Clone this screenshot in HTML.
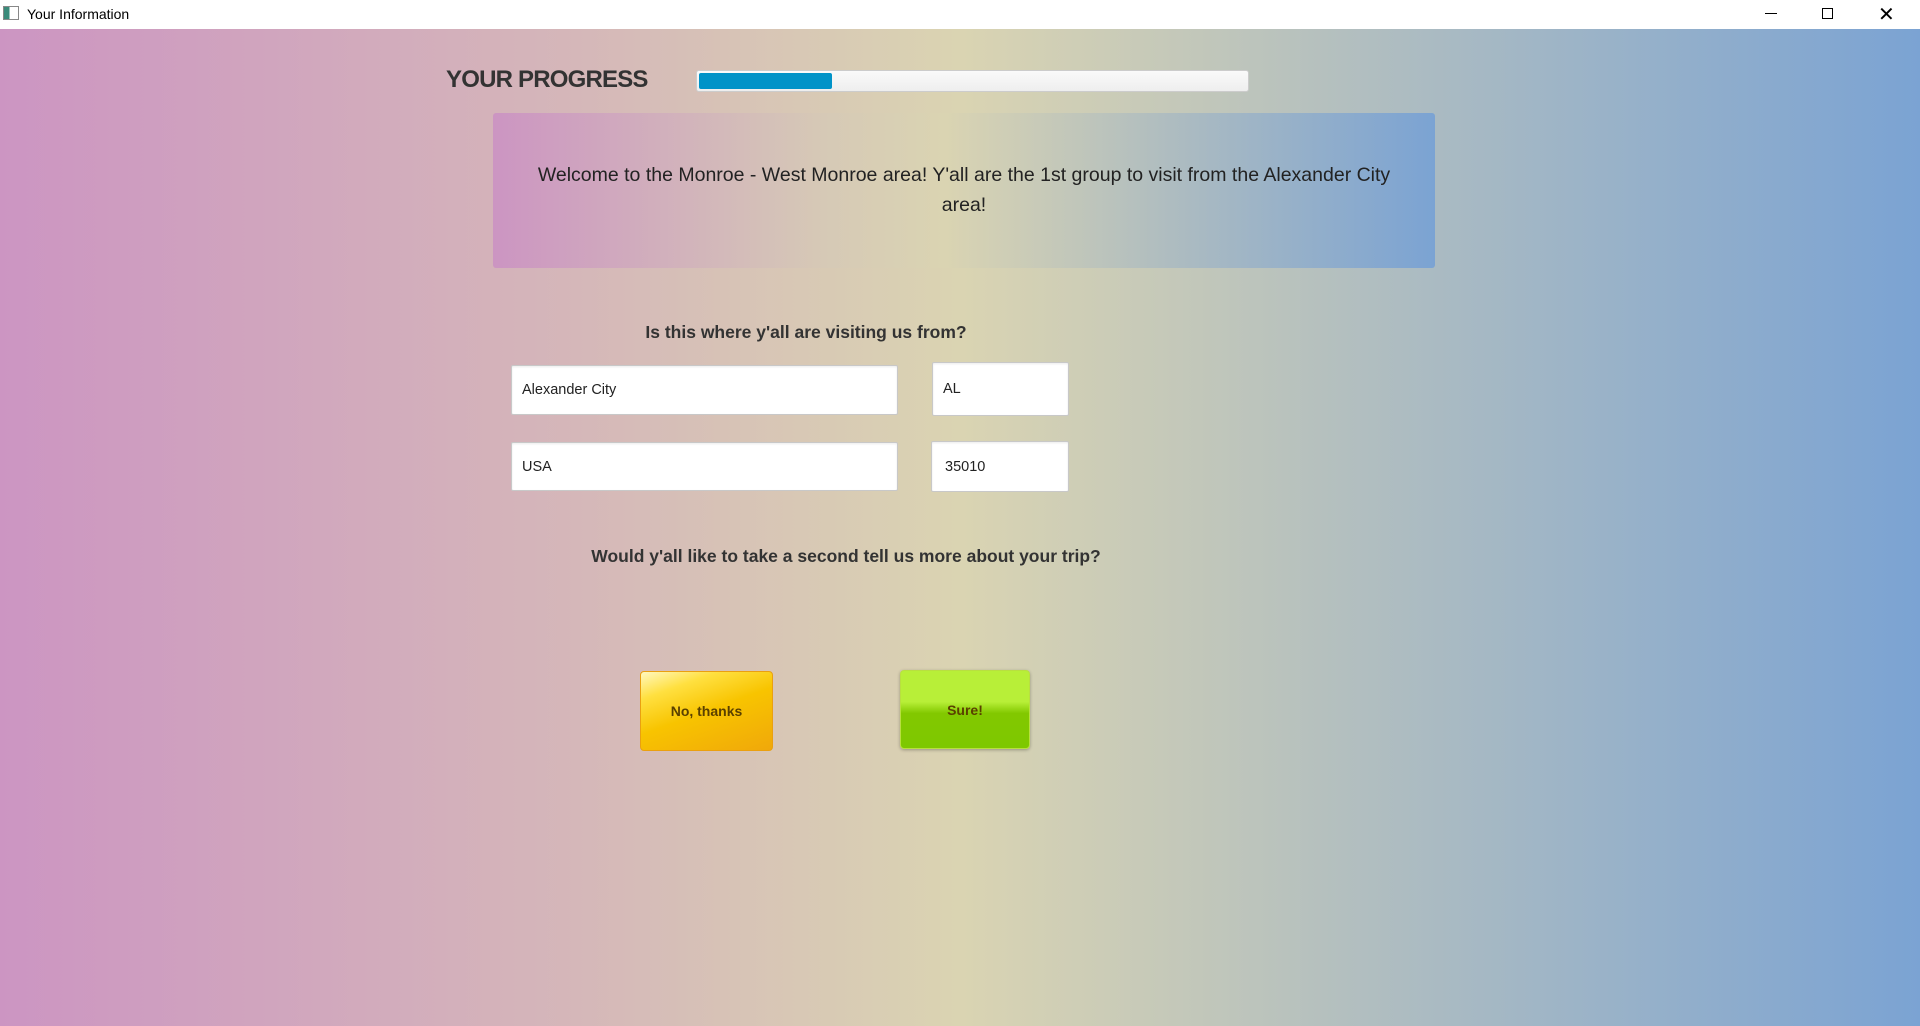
<!DOCTYPE html>
<html><head><meta charset="utf-8"><style>
*{margin:0;padding:0;box-sizing:border-box}
body{width:1920px;height:1026px;overflow:hidden;font-family:"Liberation Sans",sans-serif;position:relative;background:#fff}
.tb{position:absolute;left:0;top:0;width:1920px;height:29px;background:#fff}
.tb .t{position:absolute;left:27px;top:6px;font-size:14px;color:#000}
.tb .ic{position:absolute;left:3px;top:6px;width:16px;height:14px;border:1px solid #888;background:linear-gradient(90deg,#3a8a7a 40%,#fff 40%)}
.main{position:absolute;left:0;top:29px;width:1920px;height:997px;background:linear-gradient(90deg,#cc95c2 0%,#d5b7b9 30%,#dad4b2 50%,#b3bfbf 70%,#7ba3d3 100%)}
.a{position:absolute}
.prog{left:446px;top:66px;font-size:24px;font-weight:bold;color:#333;letter-spacing:-0.8px}
.bar{left:696px;top:70px;width:553px;height:22px;background:linear-gradient(#fafafa,#eee);border:1px solid #ccc;border-radius:3px}
.fill{position:absolute;left:2px;top:2px;width:133px;height:16px;background:#0093c8;border-radius:2px}
.box{left:493px;top:113px;width:942px;height:155px;border-radius:3px;background:linear-gradient(90deg,#cc95c2 0%,#d6c9b6 35%,#dad4b2 48%,#aebcc0 72%,#7ba3d3 100%);font-size:19.5px;color:#222;text-align:center;line-height:30px;padding:47px 20px 0}
.q{font-size:17.5px;font-weight:bold;color:#333;text-align:center}
.f{background:#fff;border:1px solid #c8c8c8;border-radius:2px;font-size:14.5px;color:#222;padding-left:10px;display:flex;align-items:center;box-shadow:inset 0 1px 2px rgba(0,0,0,.08)}
.btn{border-radius:4px;font-size:14px;font-weight:bold;color:#5a4000;display:flex;align-items:center;justify-content:center}
</style></head><body>
<div class="tb"><div class="ic"></div><div class="t">Your Information</div>
<div class="a" style="left:1765px;top:13px;width:12px;height:1px;background:#000"></div>
<div class="a" style="left:1822px;top:8px;width:11px;height:11px;border:1px solid #000"></div>
<div class="a" style="left:1878px;top:2px;font-size:20px">✕</div></div>
<div class="main"></div>
<div class="a prog">YOUR PROGRESS</div>
<div class="a bar"><div class="fill"></div></div>
<div class="a box">Welcome to the Monroe - West Monroe area! Y'all are the 1st group to visit from the Alexander City area!</div>
<div class="a q" style="left:506px;top:322px;width:600px">Is this where y'all are visiting us from?</div>
<div class="a f" style="left:511px;top:365px;width:387px;height:50px">Alexander City</div>
<div class="a f" style="left:932px;top:362px;width:137px;height:54px">AL</div>
<div class="a f" style="left:511px;top:442px;width:387px;height:49px">USA</div>
<div class="a f" style="left:931px;top:441px;width:138px;height:51px;padding-left:13px">35010</div>
<div class="a q" style="left:446px;top:546px;width:800px">Would y'all like to take a second tell us more about your trip?</div>
<div class="a btn" style="left:640px;top:671px;width:133px;height:80px;border:1px solid #eaa010;background:linear-gradient(160deg,#fff8c0 0%,#ffe040 22%,#f8c400 50%,#f0a80a 100%)">No, thanks</div>
<div class="a btn" style="left:900px;top:670px;width:130px;height:79px;border:1px solid #b8e040;background:linear-gradient(#b8ef38 0%,#b8ef38 40%,#82c800 55%,#7ec800 100%);box-shadow:0 1px 3px rgba(0,0,0,.3)">Sure!</div>
</body></html>
